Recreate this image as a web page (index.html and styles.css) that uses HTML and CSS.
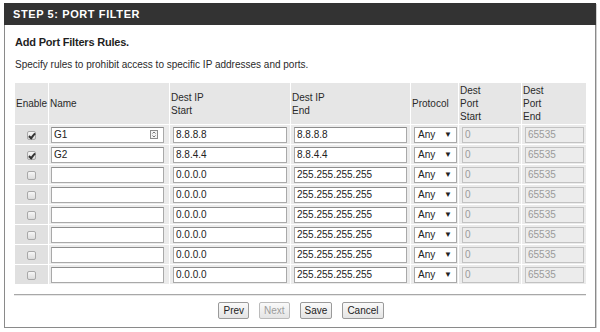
FILE: index.html
```html
<!DOCTYPE html>
<html>
<head>
<meta charset="utf-8">
<link rel="stylesheet" href="styles.css">
</head>
<body>
<div class="frame">
  <div class="bar">STEP 5: PORT FILTER</div>
  <div class="content">
    <div class="title">Add Port Filters Rules.</div>
    <div class="desc">Specify rules to prohibit access to specific IP addresses and ports.</div>
    <table class="rules">
      <colgroup>
        <col class="c-en"><col class="c-name"><col class="c-ip"><col class="c-ip2"><col class="c-proto"><col class="c-ps"><col class="c-pe">
      </colgroup>
      <thead>
        <tr>
          <th>Enable</th><th>Name</th><th>Dest IP<br>Start</th><th>Dest IP<br>End</th><th>Protocol</th><th>Dest<br>Port<br>Start</th><th>Dest<br>Port<br>End</th>
        </tr>
      </thead>
      <tbody>
        <tr>
          <td class="en"><input type="checkbox" class="cb" checked></td>
          <td><span class="namewrap"><input class="txt name" value="G1"><span class="autoicon"><svg width="8" height="9" viewBox="0 0 8 9"><rect x="0.5" y="0.5" width="7" height="8" fill="#f4f4f4" stroke="#8c8c8c"/><path d="M2.5 3.5 L4 2 L5.5 3.5 M2.5 5.5 L4 7 L5.5 5.5" fill="none" stroke="#777" stroke-width="1"/></svg></span></span></td>
          <td><input class="txt ip" value="8.8.8.8"></td>
          <td><input class="txt ip2" value="8.8.8.8"></td>
          <td><span class="sel">Any<span class="arr">▼</span></span></td>
          <td><input class="txt ps" value="0" disabled></td>
          <td><input class="txt pe" value="65535" disabled></td>
        </tr>
        <tr>
          <td class="en"><input type="checkbox" class="cb" checked></td>
          <td><input class="txt name" value="G2"></td>
          <td><input class="txt ip" value="8.8.4.4"></td>
          <td><input class="txt ip2" value="8.8.4.4"></td>
          <td><span class="sel">Any<span class="arr">▼</span></span></td>
          <td><input class="txt ps" value="0" disabled></td>
          <td><input class="txt pe" value="65535" disabled></td>
        </tr>
        <tr>
          <td class="en"><input type="checkbox" class="cb"></td>
          <td><input class="txt name" value=""></td>
          <td><input class="txt ip" value="0.0.0.0"></td>
          <td><input class="txt ip2" value="255.255.255.255"></td>
          <td><span class="sel">Any<span class="arr">▼</span></span></td>
          <td><input class="txt ps" value="0" disabled></td>
          <td><input class="txt pe" value="65535" disabled></td>
        </tr>
        <tr>
          <td class="en"><input type="checkbox" class="cb"></td>
          <td><input class="txt name" value=""></td>
          <td><input class="txt ip" value="0.0.0.0"></td>
          <td><input class="txt ip2" value="255.255.255.255"></td>
          <td><span class="sel">Any<span class="arr">▼</span></span></td>
          <td><input class="txt ps" value="0" disabled></td>
          <td><input class="txt pe" value="65535" disabled></td>
        </tr>
        <tr>
          <td class="en"><input type="checkbox" class="cb"></td>
          <td><input class="txt name" value=""></td>
          <td><input class="txt ip" value="0.0.0.0"></td>
          <td><input class="txt ip2" value="255.255.255.255"></td>
          <td><span class="sel">Any<span class="arr">▼</span></span></td>
          <td><input class="txt ps" value="0" disabled></td>
          <td><input class="txt pe" value="65535" disabled></td>
        </tr>
        <tr>
          <td class="en"><input type="checkbox" class="cb"></td>
          <td><input class="txt name" value=""></td>
          <td><input class="txt ip" value="0.0.0.0"></td>
          <td><input class="txt ip2" value="255.255.255.255"></td>
          <td><span class="sel">Any<span class="arr">▼</span></span></td>
          <td><input class="txt ps" value="0" disabled></td>
          <td><input class="txt pe" value="65535" disabled></td>
        </tr>
        <tr>
          <td class="en"><input type="checkbox" class="cb"></td>
          <td><input class="txt name" value=""></td>
          <td><input class="txt ip" value="0.0.0.0"></td>
          <td><input class="txt ip2" value="255.255.255.255"></td>
          <td><span class="sel">Any<span class="arr">▼</span></span></td>
          <td><input class="txt ps" value="0" disabled></td>
          <td><input class="txt pe" value="65535" disabled></td>
        </tr>
        <tr>
          <td class="en"><input type="checkbox" class="cb"></td>
          <td><input class="txt name" value=""></td>
          <td><input class="txt ip" value="0.0.0.0"></td>
          <td><input class="txt ip2" value="255.255.255.255"></td>
          <td><span class="sel">Any<span class="arr">▼</span></span></td>
          <td><input class="txt ps" value="0" disabled></td>
          <td><input class="txt pe" value="65535" disabled></td>
        </tr>
      </tbody>
    </table>
    <div class="rule"></div>
    <div class="buttons">
      <button class="btn">Prev</button>
      <button class="btn" disabled>Next</button>
      <button class="btn">Save</button>
      <button class="btn">Cancel</button>
    </div>
  </div>
</div>
</body>
</html>
```

FILE: styles.css
```css
html, body {
  margin: 0;
  padding: 0;
  background: #ffffff;
}
body {
  font-family: "Liberation Sans", Arial, sans-serif;
  font-size: 10px;
  color: #222;
}
.frame {
  margin: 3px 0 0 4px;
  width: 590px;
  height: 324px;
  border-left: 1px solid #8a8a8a;
  border-right: 1px solid #8a8a8a;
  border-bottom: 1px solid #8a8a8a;
  box-shadow: 1px 1px 0 #d0d0d0;
  box-sizing: content-box;
}
.bar {
  margin-left: -1px;
  margin-right: -1px;
  height: 22px;
  line-height: 23px;
  background: #333333;
  color: #fff;
  font-weight: bold;
  font-size: 11px;
  letter-spacing: 0.6px;
  padding-left: 9px;
}
.content {
  padding: 0 9px 0 9px;
}
.title {
  font-weight: bold;
  font-size: 11px;
  letter-spacing: -0.2px;
  color: #1f1f1f;
  margin: 9px 0 0 1px;
  height: 16px;
  line-height: 16px;
}
.desc {
  margin: 7px 0 0 1px;
  height: 16px;
  line-height: 16px;
  font-size: 10px;
  color: #2a2a2a;
}
.rules {
  margin-top: 9px;
  width: 572px;
  table-layout: fixed;
  border-collapse: separate;
  border-spacing: 1px;
  background: #fff;
}
.c-en { width: 33px; }
.c-name { width: 120px; }
.c-ip { width: 120px; }
.c-ip2 { width: 119px; }
.c-proto { width: 47px; }
.c-ps { width: 62px; }
.c-pe { width: 64px; }
.rules th {
  background: #e6e6e6;
  font-weight: normal;
  text-align: left;
  padding: 1px 2px 1px 1px;
  height: 37px;
  line-height: 13px;
  vertical-align: middle;
  color: #2a2a2a;
  font-size: 10px;
}
.rules td {
  background: #ebebeb;
  padding: 0 2px;
  height: 19px;
  vertical-align: middle;
}
.rules td.en {
  background: #e0e0e0;
  text-align: center;
}
.cb {
  appearance: none;
  -webkit-appearance: none;
  width: 9px;
  height: 9px;
  margin: 0;
  border: 1px solid #a8a8a8;
  border-radius: 2px;
  background: linear-gradient(#f6f6f6, #dcdcdc);
  position: relative;
  vertical-align: middle;
  display: inline-block;
}
.cb:checked::after {
  content: "";
  position: absolute;
  left: 2px;
  top: 0px;
  width: 2px;
  height: 5px;
  border-right: 2px solid #333;
  border-bottom: 2px solid #333;
  transform: rotate(40deg);
}
.txt {
  box-sizing: border-box;
  height: 16px;
  border: 1px solid #a9a9a9;
  border-top-color: #8d8d8d;
  padding: 0 2px;
  margin: 0;
  font-family: "Liberation Sans", Arial, sans-serif;
  font-size: 10px;
  color: #222;
  background: #fff;
  vertical-align: middle;
  display: block;
}
.txt:disabled {
  background: #ececec;
  color: #9a9a9a;
  border-color: #c2c2c2;
}
.name { width: 113px; }
.ip { width: 114px; margin-left: 1px; }
.ip2 { width: 113px; margin-left: 1px; }
.ps { width: 57px; margin-left: 1px; }
.pe { width: 59px; margin-left: 1px; }
.namewrap {
  position: relative;
  display: block;
  width: 113px;
}
.autoicon {
  position: absolute;
  right: 6px;
  top: 3px;
  line-height: 0;
}
.sel {
  box-sizing: border-box;
  display: flex;
  justify-content: space-between;
  align-items: center;
  width: 43px;
  height: 16px;
  margin-left: 1px;
  border: 1px solid #a9a9a9;
  background: #fff;
  padding: 0 4px 0 3px;
  color: #222;
}
.arr {
  font-size: 8px;
  color: #222;
}
.rule {
  margin-top: 9px;
  height: 1px;
  width: 572px;
  background: #a8a8a8;
  box-shadow: 0 1px 0 #e8e8e8;
}
.buttons {
  display: flex;
  justify-content: center;
  gap: 10px;
  margin-top: 7px;
  padding-left: 2px;
}
.btn {
  height: 17px;
  padding: 0 4px;
  font-family: "Liberation Sans", Arial, sans-serif;
  font-size: 10px;
  color: #222;
  border: 1px solid #9a9a9a;
  border-radius: 2px;
  background: linear-gradient(#fafafa, #e4e4e4);
  line-height: 15px;
}
.btn:disabled {
  color: #9c9c9c;
  border-color: #bbb;
}
```
